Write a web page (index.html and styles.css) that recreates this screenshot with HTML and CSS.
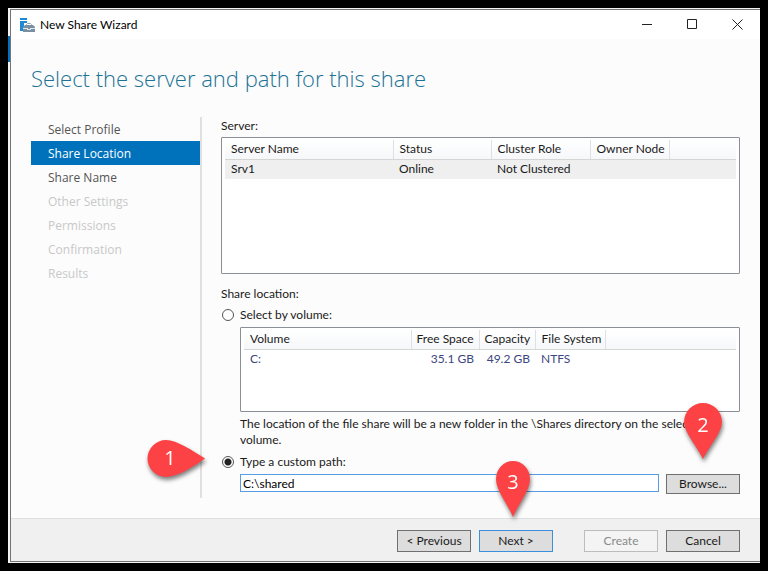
FILE: index.html
```html
<!DOCTYPE html>
<html lang="en">
<head>
  <meta charset="UTF-8">
  <meta name="viewport" content="width=device-width, initial-scale=1.0">
  <title>New Share Wizard</title>
  <link rel="stylesheet" href="styles.css">
</head>
<body>
  <div class="backdrop">
    <form class="window">
      <header class="titlebar">
        <svg class="app-icon" width="16" height="16" viewBox="0 0 16 16">
          <path fill="#1e8ad6" d="M1 1h7v2H1zM1 4h7v2H5v8H1z"/>
          <path fill="none" stroke="#8fa3b3" d="M7.500 9V7.500l1-1h3l1 1V9"/>
          <path fill="#7890a2" d="M4 10l2-2h8l2 2v5H4z"/>
          <path fill="#dfe7ec" d="M4 11h5v1h2v-1h5v1h-4v1H8v-1H4z"/>
        </svg>
        <span class="title">New Share Wizard</span>
        <button type="button" class="win-btn" aria-label="Minimize">
          <svg width="11" height="11" viewBox="0 0 11 11"><path d="M0 5.500h10"/></svg>
        </button>
        <button type="button" class="win-btn" aria-label="Maximize">
          <svg width="11" height="11" viewBox="0 0 11 11"><path d="M.5.500h9v9h-9z"/></svg>
        </button>
        <button type="button" class="win-btn" aria-label="Close">
          <svg width="11" height="11" viewBox="0 0 11 11"><path d="M.5.500l10 10M10.500.500l-10 10"/></svg>
        </button>
      </header>

      <h1>Select the server and path for this share</h1>

      <div class="content">
        <nav class="steps">
          <a href="#profile">Select Profile</a>
          <a href="#location" class="current">Share Location</a>
          <a href="#name">Share Name</a>
          <span>Other Settings</span>
          <span>Permissions</span>
          <span>Confirmation</span>
          <span>Results</span>
        </nav>

        <main>
          <p class="caption">Server:</p>
          <div class="list server-list">
            <table>
              <colgroup>
                <col class="server-name"><col class="status"><col class="role"><col class="owner"><col>
              </colgroup>
              <thead>
                <tr><th>Server Name</th><th>Status</th><th>Cluster Role</th><th>Owner Node</th><th></th></tr>
              </thead>
              <tbody>
                <tr class="selected"><td>Srv1</td><td>Online</td><td>Not Clustered</td><td></td><td></td></tr>
              </tbody>
            </table>
          </div>

          <p class="caption location-caption">Share location:</p>
          <label class="option"><input type="radio" name="location"> Select by volume:</label>
          <div class="indent">
            <div class="list volume-list">
              <table>
                <colgroup>
                  <col class="volume"><col class="free"><col class="capacity"><col class="fs"><col>
                </colgroup>
                <thead>
                  <tr><th>Volume</th><th class="num">Free Space</th><th class="num">Capacity</th><th>File System</th><th></th></tr>
                </thead>
                <tbody>
                  <tr><td>C:</td><td class="num">35.1 GB</td><td class="num">49.2 GB</td><td>NTFS</td><td></td></tr>
                </tbody>
              </table>
            </div>
            <p class="hint">The location of the file share will be a new folder in the \Shares directory on the selected volume.</p>
          </div>

          <div class="anchor">
            <label class="option"><input type="radio" name="location" checked> Type a custom path:</label>
            <svg class="pin pin-left" width="58" height="37" viewBox="0 0 58 37">
              <path d="M58 18.500C46 11 30 0 19 0a18.500 18.500 0 0 0 0 37C30 37 46 27 58 18.500z"/>
              <text x="23" y="25">1</text>
            </svg>
          </div>
          <div class="indent path-row">
            <input type="text" class="path" value="C:\shared" aria-label="Custom path">
            <div class="anchor">
              <button type="button" class="btn browse">Browse...</button>
              <svg class="pin pin-browse" width="38" height="56" viewBox="0 0 38 56">
                <path d="M19 56C12 42 0 29 0 19a19 19 0 0 1 38 0C38 29 26 42 19 56z"/>
                <text x="19" y="29">2</text>
              </svg>
            </div>
          </div>
        </main>
      </div>

      <footer>
        <button type="button" class="btn">&lt; Previous</button>
        <div class="anchor">
          <button type="submit" class="btn default">Next &gt;</button>
          <svg class="pin pin-next" width="34" height="56" viewBox="0 0 34 56">
            <path d="M17 56C11 42 0 29 0 18a17 18 0 0 1 34 0C34 29 23 42 17 56z"/>
            <text x="17" y="28">3</text>
          </svg>
        </div>
        <button type="button" class="btn create" disabled>Create</button>
        <button type="button" class="btn">Cancel</button>
      </footer>
    </form>
  </div>
</body>
</html>
```
FILE: styles.css
```css
* {
  box-sizing: border-box;
  margin: 0;
  padding: 0;
}

body {
  display: flex;
  min-height: 100vh;
  padding: 8px;
  background: #000;
  font-family: "Open Sans", "Noto Sans", sans-serif;
  font-size: 12px;
  line-height: 16px;
  color: #1a1a1a;
}

input, button {
  font: inherit;
  color: inherit;
}

/* sliver of the app behind the dialog */
.backdrop {
  display: flex;
  flex: 1;
  padding: 1px 0 1px 2px;
  background: linear-gradient(#0072c0, #0072c0) 0 28px / 2px 26px no-repeat #f4f4f4;
}

.window {
  display: flex;
  flex-direction: column;
  flex: 1;
  border: 1px solid #747474;
  border-right: none;
  background: #fcfcfc;
}

.titlebar {
  display: flex;
  align-items: center;
  height: 29px;
  padding-left: 8px;
  background: #fff;
  font-family: Lato, sans-serif;
}

.title {
  flex: 1;
  margin-left: 5px;
  color: #000;
}

.win-btn {
  display: flex;
  align-items: center;
  justify-content: center;
  width: 45px;
  height: 29px;
  border: none;
  background: none;
}

.win-btn svg {
  fill: none;
  stroke: #222;
}

h1 {
  padding: 24px 20px;
  font-size: 22px;
  font-weight: 300;
  line-height: 30px;
  color: #1b7294;
}

.content {
  display: flex;
  flex: 1;
  padding: 0 20px 20px 20px;
}

.steps {
  display: flex;
  flex-direction: column;
  width: 171px;
  border-right: 2px solid #e0e0e0;
}

.steps a, .steps span {
  padding: 5px 0 3px 17px;
  color: #555;
  text-decoration: none;
}

.steps span {
  color: #c8c8c8;
}

.steps .current {
  background: #0072bc;
  color: #fff;
}

main {
  flex: 1;
  margin-left: 19px;
  padding-top: 1px;
  font-family: Lato, sans-serif;
}

.caption {
  margin-bottom: 3px;
}

.location-caption {
  margin: 12px 0 5px;
}

.list {
  padding: 2px 3px;
  border: 1px solid #8b8f98;
  border-radius: 1px;
  background: #fff;
}

.server-list {
  height: 137px;
}

.volume-list {
  height: 85px;
  margin-top: 4px;
}

table {
  width: 100%;
  table-layout: fixed;
  border-collapse: collapse;
}

th {
  height: 19px;
  padding: 0 6px;
  border-right: 1px solid #dde0e4;
  border-bottom: 1px solid #d5d5d5;
  background: linear-gradient(#fff, #f6f7f9);
  font-weight: 400;
  text-align: left;
  white-space: nowrap;
}

th:last-child {
  border-right: none;
}

td {
  height: 20px;
  padding: 0 6px;
  white-space: nowrap;
}

.num {
  padding: 0 5px;
  text-align: right;
}

.selected {
  background: #efefef;
}

.server-name { width: 168px; }
.status { width: 98px; }
.role { width: 99px; }
.owner { width: 79px; }

.volume { width: 167px; }
.free { width: 68px; }
.capacity { width: 56px; }
.fs { width: 70px; }

.volume-list td {
  color: #3b4680;
}

.indent {
  margin-left: 19px;
}

.hint {
  margin: 4px 0 6px;
}

.option {
  display: flex;
  align-items: center;
  gap: 6px;
}

.option input {
  width: 12px;
  height: 12px;
  margin-left: 1px;
  appearance: none;
  border: 1px solid #555;
  border-radius: 50%;
  background: #fff;
}

.option input:checked {
  background: radial-gradient(#222 3px, #fff 4px);
}

.path-row {
  display: flex;
  align-items: flex-start;
  gap: 7px;
  margin-top: 4px;
}

.path {
  flex: 1;
  height: 18px;
  padding: 0 2px;
  border: 1px solid #569de5;
  background: #fff;
  color: #000;
}

.btn {
  display: block;
  width: 74px;
  height: 22px;
  border: 1px solid #707070;
  background: #ddd;
  line-height: 20px;
}

.browse {
  height: 20px;
  line-height: 18px;
}

.default {
  border-color: #3c8fdc;
}

.btn:disabled {
  border-color: #bcbcbc;
  background: #f4f4f4;
  color: #8a8a8a;
}

footer {
  display: flex;
  justify-content: flex-end;
  gap: 8px;
  padding: 11px 20px 9px;
  border-top: 1px solid #dfdfdf;
  background: #f0f0f0;
  font-family: Lato, sans-serif;
}

.create {
  margin-left: 23px;
}

/* numbered callouts over the controls */
.anchor {
  position: relative;
}

.pin {
  position: absolute;
  overflow: visible;
  filter: drop-shadow(1px 3px 2px rgba(0, 0, 0, 0.5));
  pointer-events: none;
}

.pin path {
  fill: #fd4245;
}

.pin text {
  fill: #fff;
  font-family: "Open Sans", sans-serif;
  font-size: 20px;
  text-anchor: middle;
}

.pin-left {
  top: -14px;
  left: -74px;
}

.pin-browse {
  bottom: 35px;
  left: 18px;
}

.pin-next {
  bottom: 35px;
  left: 17px;
}
```
